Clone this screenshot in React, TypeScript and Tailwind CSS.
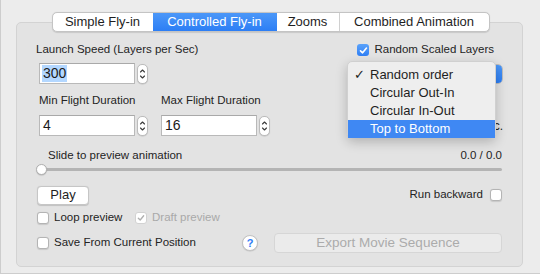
import React from "react";

const tabs = [
    { label: "Simple Fly-in", w: "w-[100px]" },
    { label: "Controlled Fly-in", w: "w-[124px]", active: true },
    { label: "Zooms", w: "w-[62px]" },
    { label: "Combined Animation", w: "w-[150px]" },
];

const menuItems = ["Random order", "Circular Out-In", "Circular In-Out", "Top to Bottom"];

function Checkbox({ checked = false, disabled = false }: { checked?: boolean; disabled?: boolean }) {
    if (checked && !disabled) {
        return (
            <span className="flex h-[12px] w-[12px] shrink-0 items-center justify-center rounded-[3px] bg-gradient-to-b from-[#5aa2fa] to-[#2f7ff5]">
                <svg width="9" height="9" viewBox="0 0 9 9" fill="none">
                    <path d="M1.5 4.8 L3.6 6.8 L7.5 2" stroke="white" strokeWidth="1.6" strokeLinecap="round" strokeLinejoin="round" />
                </svg>
            </span>
        );
    }
    return (
        <span
            className={`flex h-[12px] w-[12px] shrink-0 items-center justify-center rounded-[3px] border bg-white ${
                disabled ? "border-[#d2d2d2]" : "border-[#b4b4b4] shadow-[0_0.5px_1px_rgba(0,0,0,0.12)]"
            }`}
        >
            {checked && (
                <svg width="8" height="8" viewBox="0 0 9 9" fill="none">
                    <path d="M1.5 4.8 L3.6 6.8 L7.5 2" stroke="#b0b0b0" strokeWidth="1.5" strokeLinecap="round" strokeLinejoin="round" />
                </svg>
            )}
        </span>
    );
}

function Stepper() {
    return (
        <span className="ml-[2px] flex h-[20px] w-[11px] shrink-0 items-center justify-center rounded-[5px] border border-[#bcbcbc] bg-white shadow-[0_0.5px_1px_rgba(0,0,0,0.15)]">
            <svg width="9" height="18" viewBox="0 0 9 18" fill="none">
                <path d="M2.5 7 L4.5 5 L6.5 7" stroke="#3a3a3a" strokeWidth="1.1" strokeLinecap="round" strokeLinejoin="round" />
                <path d="M2.5 11 L4.5 13 L6.5 11" stroke="#3a3a3a" strokeWidth="1.1" strokeLinecap="round" strokeLinejoin="round" />
            </svg>
        </span>
    );
}

function NumberField({ value, selected = false }: { value: string; selected?: boolean }) {
    return (
        <div className="flex items-center">
            <div className="flex h-[21px] w-[96px] items-center border border-[#b9b9b9] border-t-[#a9a9a9] bg-white pl-[2px] text-[14px] leading-[17px] text-[#1a1a1a]">
                <span className={selected ? "bg-[#b3d7ff] px-[1px]" : "px-[1px]"}>{value}</span>
            </div>
            <Stepper />
        </div>
    );
}

export default function App() {
    return (
        <div className="h-[274px] w-[540px] overflow-hidden border-b border-l border-[#cdcdcd] bg-[#ececec] font-['Liberation_Sans',Arial,sans-serif] text-[#242424]">
            {/* Tabs */}
            <div className="relative z-10 flex justify-center pt-[12px]">
                <div className="flex h-[20px] overflow-hidden rounded-[5px] border border-[#c4c4c4] bg-white text-[13px] leading-[18px] shadow-[0_0.5px_1px_rgba(0,0,0,0.12)]">
                    {tabs.map((t, i) => (
                        <div
                            key={t.label}
                            className={`${t.w} flex items-center justify-center ${
                                t.active ? "bg-gradient-to-b from-[#4b97f8] to-[#2c7ef5] text-white" : "text-[#1e1e1e]"
                            } ${i === 3 ? "border-l border-[#d0d0d0]" : ""}`}
                        >
                            {t.label}
                        </div>
                    ))}
                </div>
            </div>

            {/* Group box */}
            <div className="relative ml-[15px] mt-[-10px] flex h-[245px] w-[507px] flex-col rounded-[5px] border border-[#d3d3d3] bg-[#e3e3e3] pl-[19px] pr-[19px] pt-[19px] text-[11.5px]">
                <div className="flex h-[16px] items-center justify-between">
                    <span>Launch Speed (Layers per Sec)</span>
                    <div className="mr-[9px] flex items-center gap-[5px]">
                        <Checkbox checked />
                        <span>Random Scaled Layers</span>
                    </div>
                </div>

                <div className="mt-[5px] flex h-[21px] items-center justify-between">
                    <div className="ml-[3px]">
                        <NumberField value="300" selected />
                    </div>
                    <div className="flex h-[20px] w-[150px] overflow-hidden rounded-[5px] border border-[#bdbdbd] bg-white">
                        <div className="flex-1" />
                        <div className="w-[16px] bg-gradient-to-b from-[#4b97f8] to-[#2c7ef5]" />
                    </div>
                </div>

                <div className="mt-[9px] flex h-[15px] items-center">
                    <span className="ml-[3px] w-[122px]">Min Flight Duration</span>
                    <span>Max Flight Duration</span>
                </div>

                <div className="mt-[7px] flex h-[21px] items-center">
                    <div className="ml-[3px]">
                        <NumberField value="4" />
                    </div>
                    <div className="ml-[13px]">
                        <NumberField value="16" />
                    </div>
                    <span className="ml-auto text-[12px]">Sec.</span>
                </div>

                <div className="mt-[13px] flex h-[14px] items-center justify-between">
                    <span className="ml-[12px]">Slide to preview animation</span>
                    <span className="mr-[1px]">0.0 / 0.0</span>
                </div>

                {/* Slider */}
                <div className="relative mt-[1px] h-[11px]">
                    <div className="absolute left-[4px] right-[1px] top-[4px] h-[3px] rounded-full bg-[#b4b4b4]" />
                    <div className="absolute left-0 top-0 h-[11px] w-[11px] rounded-full border border-[#b0b0b0] bg-white shadow-[0_0.5px_1px_rgba(0,0,0,0.2)]" />
                </div>

                <div className="mt-[10px] flex h-[20px] items-center justify-between">
                    <button className="ml-[1px] flex h-[19px] w-[52px] items-center justify-center rounded-[4px] border border-[#c6c6c6] bg-white text-[13px] text-[#1e1e1e] shadow-[0_0.5px_1px_rgba(0,0,0,0.15)]">
                        Play
                    </button>
                    <div className="mr-[1px] flex items-center gap-[7px]">
                        <span>Run backward</span>
                        <Checkbox />
                    </div>
                </div>

                <div className="mt-[7px] flex h-[12px] items-center">
                    <div className="ml-[1px] flex w-[98px] items-center gap-[5px]">
                        <Checkbox />
                        <span>Loop preview</span>
                    </div>
                    <div className="flex items-center gap-[5px] text-[#a9a9a9]">
                        <Checkbox checked disabled />
                        <span>Draft preview</span>
                    </div>
                </div>

                <div className="mt-[9px] flex h-[20px] items-center">
                    <div className="ml-[1px] flex w-[205px] items-center gap-[5px]">
                        <Checkbox />
                        <span>Save From Current Position</span>
                    </div>
                    <div className="flex h-[16px] w-[16px] items-center justify-center rounded-full border border-[#c2c2c2] bg-white text-[11px] font-bold text-[#2d7cf6] shadow-[0_0.5px_1px_rgba(0,0,0,0.15)]">
                        ?
                    </div>
                    <div className="ml-[16px] flex h-[20px] w-[228px] items-center justify-center rounded-[4px] border border-[#d6d6d6] bg-[#ebebeb] text-[13.5px] text-[#ababab]">
                        Export Movie Sequence
                    </div>
                </div>

                {/* Popup menu */}
                <div className="absolute left-[330px] top-[38px] z-20 h-[77px] w-[149px] rounded-[5px] border border-[#d0d0d0] bg-[#eeeeee] pt-[4px] text-[13px] text-[#1e1e1e] shadow-[0_4px_12px_rgba(0,0,0,0.22)]">
                    {menuItems.map((item, i) => (
                        <div
                            key={item}
                            className={`flex h-[18px] items-center pl-[6px] ${i === 3 ? "bg-[#3f88f3] text-white" : ""}`}
                        >
                            <span className="w-[16px]">{i === 0 ? "✓" : ""}</span>
                            <span>{item}</span>
                        </div>
                    ))}
                </div>
            </div>
        </div>
    );
}
